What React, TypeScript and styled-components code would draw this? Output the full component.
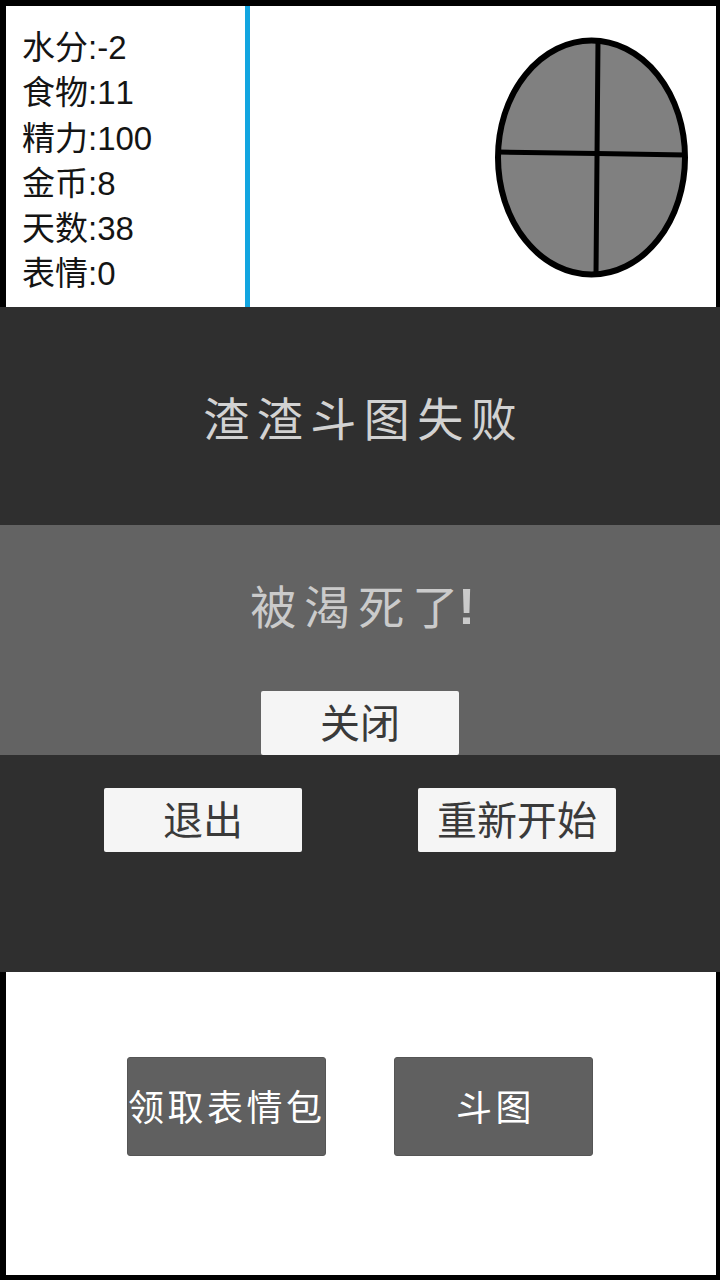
import styled, { createGlobalStyle } from 'styled-components'

const GlobalStyle = createGlobalStyle`
  html, body {
    margin: 0;
    padding: 0;
    background: #fff;
  }
`

const sansStack = `"Liberation Sans", "Noto Sans CJK SC", sans-serif`

const Frame = styled.div`
  box-sizing: border-box;
  width: 720px;
  height: 1280px;
  display: flex;
  flex-direction: column;
  background: #fff;
  border-style: solid;
  border-color: #000;
  border-width: 6px 4px 5px 6px;
  font-family: ${sansStack};
  font-kerning: none;
`

const TopPanel = styled.div`
  height: 301px;
  display: flex;
`

const Stats = styled.div`
  box-sizing: border-box;
  width: 244px;
  padding: 19px 0 0 16px;
  border-right: 5px solid #12a5e0;
  color: #141414;
  font-size: 33px;
`

const StatLine = styled.div`
  height: 45.3px;
  line-height: 45.3px;
  white-space: nowrap;
`

const DialRow = styled.div`
  flex: 1;
  display: flex;
  justify-content: flex-end;
  padding: 31px 27px 0 0;
`

const Overlay = styled.div`
  height: 665px;
  margin: 0 -4px 0 -6px;
  background: #2f2f2f;
  display: flex;
  flex-direction: column;
`

const Title = styled.div`
  height: 218px;
  display: flex;
  align-items: center;
  justify-content: center;
  box-sizing: border-box;
  color: #d2d2d2;
  font-size: 46px;
  letter-spacing: 7.5px;
  text-indent: 7.5px;
`

const MessageBar = styled.div`
  height: 230px;
  background: #636363;
  display: flex;
  flex-direction: column;
  align-items: center;
  justify-content: space-between;
`

const Message = styled.div`
  margin-top: 54px;
  padding-left: 5px;
  height: 56px;
  line-height: 56px;
  color: #cbcbcb;
  font-size: 46px;
  letter-spacing: 8px;
`

const MessageTail = styled.span`
  letter-spacing: 0;
`

const Bang = styled.span`
  font-size: 50px;
  font-weight: 700;
`

const LightButton = styled.button`
  width: 198px;
  height: 64px;
  padding: 2px 0 0;
  border: 0;
  border-radius: 2px;
  background: #f5f5f5;
  color: #3a3a3a;
  font-family: ${sansStack};
  font-size: 40px;
  line-height: 62px;
`

const ActionRow = styled.div`
  display: flex;
  justify-content: center;
  gap: 116px;
  padding-top: 33px;
`

const Bottom = styled.div`
  flex: 1;
  display: flex;
  justify-content: center;
  gap: 68px;
  padding: 85px 2px 0 0;
`

const DarkButton = styled.button<{ $indent: number }>`
  box-sizing: border-box;
  width: 199px;
  height: 99px;
  padding: 0 0 4px;
  border: 1px solid #555;
  border-radius: 3px;
  background: #606060;
  color: #fff;
  font-family: ${sansStack};
  font-size: 36px;
  letter-spacing: 3.5px;
  text-indent: ${(props) => props.$indent}px;
  white-space: nowrap;
`

const stats = ['水分:-2', '食物:11', '精力:100', '金币:8', '天数:38', '表情:0']

function Dial() {
  return (
    <svg width="194" height="241" viewBox="0 0 194 241" fill="none">
      <ellipse cx="96.5" cy="120.5" rx="93.5" ry="117" fill="#808080" stroke="#000" strokeWidth="6" />
      <path d="M103 3 L102 120 L101 238" stroke="#000" strokeWidth="5" />
      <path d="M3 115 L102 116.5 L191 118" stroke="#000" strokeWidth="5" />
    </svg>
  )
}

export default function App() {
  return (
    <>
      <GlobalStyle />
      <Frame>
        <TopPanel>
          <Stats>
            {stats.map((line) => (
              <StatLine key={line}>{line}</StatLine>
            ))}
          </Stats>
          <DialRow>
            <Dial />
          </DialRow>
        </TopPanel>
        <Overlay>
          <Title>渣渣斗图失败</Title>
          <MessageBar>
            <Message>
              被渴死<MessageTail>了<Bang>!</Bang></MessageTail>
            </Message>
            <LightButton>关闭</LightButton>
          </MessageBar>
          <ActionRow>
            <LightButton>退出</LightButton>
            <LightButton>重新开始</LightButton>
          </ActionRow>
        </Overlay>
        <Bottom>
          <DarkButton $indent={0}>领取表情包</DarkButton>
          <DarkButton $indent={4}>斗图</DarkButton>
        </Bottom>
      </Frame>
    </>
  )
}
